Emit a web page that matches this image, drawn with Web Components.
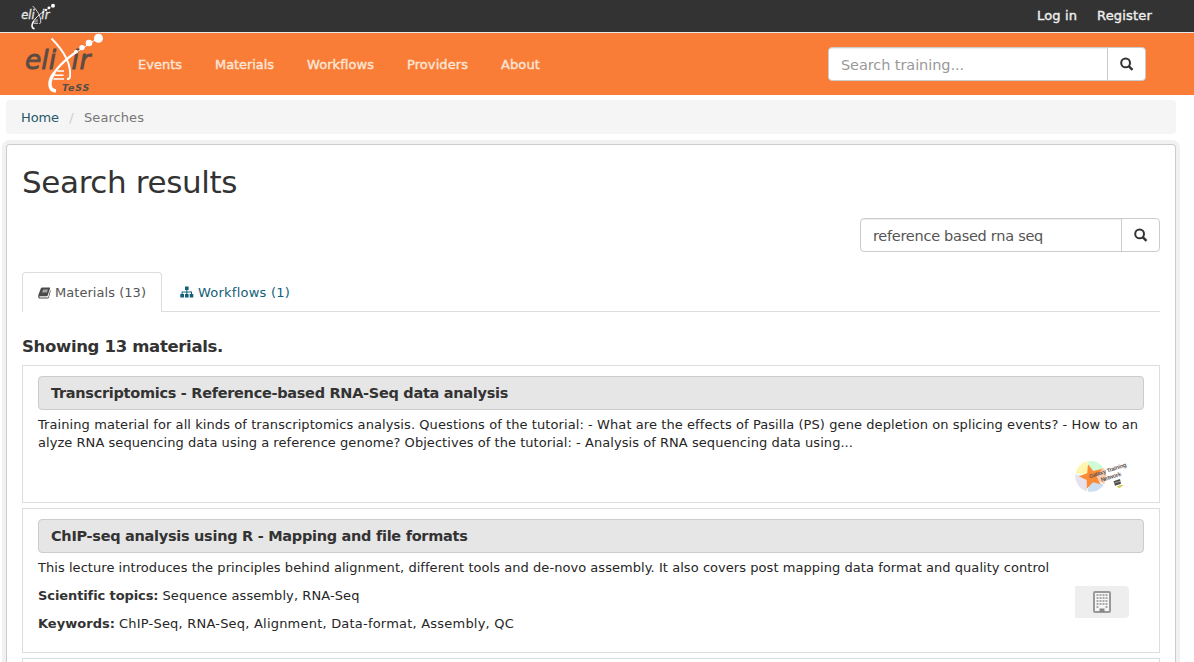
<!DOCTYPE html>
<html lang="en">
<head>
<meta charset="utf-8">
<title>Search results</title>
<style>
html,body{margin:0;background:#fff}
body{font-family:Verdana,"DejaVu Sans",sans-serif;font-size:13px;line-height:18px;color:#333;height:662px;overflow:hidden}
</style>
</head>
<body>
<tess-page></tess-page>
<script>
const define=(name,html,setup)=>{
  const t=document.createElement('template');
  t.innerHTML=html;
  customElements.define(name,class extends HTMLElement{
    constructor(){super();this.attachShadow({mode:'open'}).append(t.content.cloneNode(true));}
    connectedCallback(){if(setup)setup(this,this.shadowRoot);}
  });
};

/* Inline text whose tracking is adjusted to a given measure, w in px. */
define('fit-text','<style>:host{display:inline-block;white-space:pre}</style><span><slot></slot></span>',(el,root)=>{
  const s=root.querySelector('span'),w=+el.getAttribute('w');
  const n=el.textContent.length;
  requestAnimationFrame(()=>{s.style.letterSpacing=((w-s.getBoundingClientRect().width)/n)+'px';});
});

define('elixir-mark',`<style>:host{display:block;color:#5a4c45}svg{display:block;width:100%;height:100%;overflow:visible}text{font:italic 26.5px "DejaVu Sans",sans-serif;fill:currentColor;stroke:currentColor;stroke-width:.8px}</style>
<svg viewBox="0 0 80 60">
 <text x="0" y="35" textLength="31">eli</text><text x="46.5" y="35" textLength="19">ir</text>
 <g fill="none" stroke="#fff">
  <path d="M26.5 4.5C37 15 46.5 29 45 43Q44.7 45 42 45" stroke-width="1.9"/>
  <path d="M51 18C40 26 25.5 38 25 50" stroke-width="2.2"/>
  <path d="M29.5 39Q24.5 45 25 51Q25.4 56.5 31 57" stroke-width="3.4"/>
  <path d="M32 37H39M30 41.2H38.5M28.5 45H39" stroke-width="1.5"/>
  <path d="M49 20L73 4" stroke-width="1"/>
 </g>
 <g fill="#fff"><circle cx="51" cy="17.6" r="1.9"/><circle cx="57" cy="13.6" r="2.7"/><circle cx="64" cy="9" r="3.3"/><circle cx="73.5" cy="4.2" r="4.5"/></g>
</svg>`);

define('search-box',`<style>
:host{display:flex;height:34px;box-sizing:border-box;border:1px solid #ccc;border-radius:4px;background:#fff;overflow:hidden;font-size:14.5px;line-height:35px;color:#555}
.f{flex:1;padding-left:12px;box-shadow:inset 0 1px 1px rgba(0,0,0,.075)}
.b{width:37px;border-left:1px solid #ccc;display:flex;align-items:center;justify-content:center}
svg{display:block}
</style><div class="f"><slot></slot></div><div class="b"><svg width="14" height="14" viewBox="0 0 14 14" fill="none" stroke="#333"><circle cx="5.6" cy="5.9" r="4.4" stroke-width="2"/><path d="M8.7 9.1L12.5 12.8" stroke-width="2.4"/></svg></div>`);

define('top-bar',`<style>
:host{display:flex;height:32px;background:#333;border-bottom:1px solid #e7e7e7;align-items:flex-start;padding:0 42px 0 21px;color:#eee}
elixir-mark{width:35px;height:26px;color:#e4e4e4;margin-top:4px}
nav{margin-left:auto;display:flex;gap:20px;line-height:31px;-webkit-text-stroke:.4px #eee}
</style><elixir-mark></elixir-mark><nav><fit-text w="40">Log in</fit-text><fit-text w="55">Register</fit-text></nav>`);

define('main-nav',`<style>
:host{display:flex;height:62px;background:#fa7d37;padding-left:25px;color:#fce5d6}
.logo{position:relative;width:80px;height:62px}
elixir-mark{width:80px;height:60px;margin-top:1px}
b{position:absolute;left:37px;top:49px;font:italic bold 9.5px/12px "DejaVu Sans",sans-serif;color:#554e49}
nav{display:flex;gap:33px;margin-left:33px;line-height:63px;-webkit-text-stroke:.4px #fce5d6}
search-box{width:318px;margin:14px 48px 0 auto;color:#999}
</style><div class="logo"><elixir-mark></elixir-mark><b><fit-text w="28">TeSS</fit-text></b></div>
<nav><fit-text w="44">Events</fit-text><fit-text w="59">Materials</fit-text><fit-text w="67">Workflows</fit-text><fit-text w="61">Providers</fit-text><fit-text w="39">About</fit-text></nav>
<search-box><fit-text w="123">Search training...</fit-text></search-box>`);

define('crumb-trail',`<style>
:host{display:flex;height:34px;margin:5px 18px 0 6px;box-sizing:border-box;padding-left:15px;background:#f5f5f5;border-radius:4px;line-height:35px;color:#777}
.h{color:#25596b}.s{width:25px;text-align:center;color:#ccc}
</style><span class="h"><fit-text w="38">Home</fit-text></span><span class="s">/</span><fit-text w="60">Searches</fit-text>`);

define('result-tabs',`<style>
:host{display:flex;height:40px;box-sizing:border-box;border-bottom:1px solid #ddd;color:#555;line-height:41px}
div{display:flex;align-items:center;box-sizing:border-box}
.a{width:140px;height:40px;border:1px solid #ddd;border-bottom:0;border-radius:4px 4px 0 0;background:#fff;padding-left:15px}
.w{height:40px;padding-left:18px;color:#126078}
svg{display:block;margin-right:4px}
</style>
<div class="a"><svg width="13" height="12" viewBox="0 0 13 12"><path fill="#4a4a4a" fill-rule="evenodd" d="M4.2.5H11.5Q12.3.7 12 1.6L9.7 8.5Q9.5 9.2 8.6 9.2H2Q1.3 9.2 1.3 9.8T2 10.5H9.6Q10.2 10.5 10.4 9.8L12.2 3Q12.9 3.4 12.6 4.2L10.9 10.5Q10.6 11.6 9.5 11.6H2Q.2 11.6.2 9.7L.4 7.8 2.9 1.2Q3.2.5 4.2.5ZM5 2.7L4.8 3.4H9.6L9.9 2.7ZM4.4 4.6L4.2 5.3H9L9.3 4.6Z"/></svg><fit-text w="91">Materials (13)</fit-text></div>
<div class="w"><svg width="14" height="12" viewBox="0 0 14 12"><path fill="#126078" d="M5 .5H8.6V4H7.3V5.5H12V8H13.3V11.5H9.7V8H11V6.4H7.3V8H8.6V11.5H5V8H6.3V6.4H2.6V8H4V11.5H.3V8H1.6V5.5H6.3V4H5Z"/></svg><fit-text w="92">Workflows (1)</fit-text></div>`);

define('result-card',`<style>
:host{display:block;box-sizing:border-box;border:1px solid #ddd;margin-bottom:5px;padding:10px 15px;position:relative;color:#262626}
.t{height:34px;box-sizing:border-box;border:1px solid #ccc;border-radius:4px;background:#e6e6e6;padding-left:12px;font-size:14.5px;font-weight:bold;line-height:33px;color:#333}
.c{padding-top:6px}
.i{position:absolute;right:30px;bottom:var(--icon-bottom)}
</style><div class="t"><slot name="title"></slot></div><div class="c"><slot></slot></div><div class="i"><slot name="icon"></slot></div>`);

define('text-row',`<style>:host{display:flex;height:18px;line-height:18px;margin-bottom:var(--gap,0)}</style><slot></slot>`);

define('galaxy-badge',`<style>:host{display:block;width:54px;height:32px}svg{display:block;overflow:visible}text{font:bold 5.8px "Liberation Sans",sans-serif;fill:#5e5552}</style>
<svg width="54" height="32" viewBox="0 0 54 32"><g transform="translate(0 .8)">
<path d="M15.5 15.5L12.5 0.3A15.5 15.5 0 0 0 .5 13Z" fill="#fff5ae"/><path d="M15.5 15.5L12.5.4A15.5 15.5 0 0 1 28.4 7Z" fill="#cffbd6"/><path d="M15.5 15.5L28.4 7A15.5 15.5 0 0 1 29 24Z" fill="#fbcdb4"/><path d="M15.5 15.5L29 24A15.5 15.5 0 0 1 12.4 30.6Z" fill="#cbdff1"/><path d="M15.5 15.5L12.4 30.6A15.5 15.5 0 0 1 .5 13Z" fill="#e8e1ee"/>
<path d="M15 15L12.6 0M15 15L29 24M15 15L12 31M15 15L0 13" stroke="#fff" stroke-width="1"/>
<path d="M13 3.5L18.3 10.3 27.5 8 21.5 15.5 25.5 23.5 18 21.5 11.8 28 11.7 19.3 4 15.4 12.2 12.5Z" fill="#fb8c35"/>
<text transform="translate(14.8 17.6) rotate(-18)" textLength="39">Galaxy Training</text><text transform="translate(26.4 21) rotate(-17)" textLength="21">Network</text>
<path d="M38.5 20.5L45 18.3 46 23 40 25Z" fill="#4c4b48"/><path d="M39.5 22.2L46 20.2" stroke="#ddd" stroke-width=".6"/><path d="M42 25.7Q46 23 48.5 24.5L44 27.5Z" fill="#d5cc56"/></g></svg>`);

define('building-badge',`<style>:host{display:flex;width:54px;height:32px;background:#eee;border-radius:0 4px 4px 0;align-items:center;justify-content:center}</style>
<svg width="18" height="22" viewBox="0 0 18 22"><rect x="1" y="1" width="16" height="20" rx="1" fill="#f6f6f6" stroke="#999" stroke-width="2"/><g stroke="#aaa" stroke-width="2" stroke-dasharray="2 1"><path d="M3.5 4H14.5M3.5 7H14.5M3.5 10H14.5M3.5 13H14.5"/></g><path d="M3.5 16H5.5M12.5 16H14.5" stroke="#aaa" stroke-width="2"/><path d="M6.5 17.5H11.5V21H6.5Z" fill="#888"/></svg>`);

define('tess-page',`<style>
:host{display:flex;flex-direction:column;height:662px;overflow:hidden}
top-bar,main-nav,crumb-trail{flex:none}
main{display:block;box-sizing:border-box;flex:1;margin:10px 18px 0 6px;border:1px solid #ccc;border-bottom:0;border-radius:4px 4px 0 0;box-shadow:0 0 0 4px #f1f1f1;padding:0 15px;height:518px}
h1{margin:0;padding-top:17px;font-weight:normal;font-size:31px;line-height:40px;color:#333}
main>search-box{width:300px;margin:16px 0 20px auto}
h4{margin:24px 0 8px;font-size:16.5px;line-height:21px}
.one{height:138px;--icon-bottom:10px}
.two{height:145px;--icon-bottom:34px}
.next{height:4px;margin:0;padding:0;border-bottom:0;overflow:hidden}
b{margin-right:4px;color:#333}
</style>
<top-bar></top-bar><main-nav></main-nav><crumb-trail></crumb-trail>
<main>
<h1><fit-text w="215">Search results</fit-text></h1>
<search-box><fit-text w="170">reference based rna seq</fit-text></search-box>
<result-tabs></result-tabs>
<h4><fit-text w="201">Showing 13 materials.</fit-text></h4>
<result-card class="one"><fit-text slot="title" w="457">Transcriptomics - Reference-based RNA-Seq data analysis</fit-text>
<text-row><fit-text w="1100">Training material for all kinds of transcriptomics analysis. Questions of the tutorial: - What are the effects of Pasilla (PS) gene depletion on splicing events? - How to an</fit-text></text-row>
<text-row><fit-text w="815">alyze RNA sequencing data using a reference genome? Objectives of the tutorial: - Analysis of RNA sequencing data using...</fit-text></text-row>
<galaxy-badge slot="icon"></galaxy-badge></result-card>
<result-card class="two"><fit-text slot="title" w="416">ChIP-seq analysis using R - Mapping and file formats</fit-text>
<text-row style="--gap:10px"><fit-text w="1011">This lecture introduces the principles behind alignment, different tools and de-novo assembly. It also covers post mapping data format and quality control</fit-text></text-row>
<text-row style="--gap:10px"><b><fit-text w="120">Scientific topics:</fit-text></b><fit-text w="197">Sequence assembly, RNA-Seq</fit-text></text-row>
<text-row><b><fit-text w="77">Keywords:</fit-text></b><fit-text w="395">ChIP-Seq, RNA-Seq, Alignment, Data-format, Assembly, QC</fit-text></text-row>
<building-badge slot="icon"></building-badge></result-card>
<div class="next" style="border:1px solid #ddd;border-bottom:0;box-sizing:border-box"></div>
</main>`);
</script>
</body>
</html>
